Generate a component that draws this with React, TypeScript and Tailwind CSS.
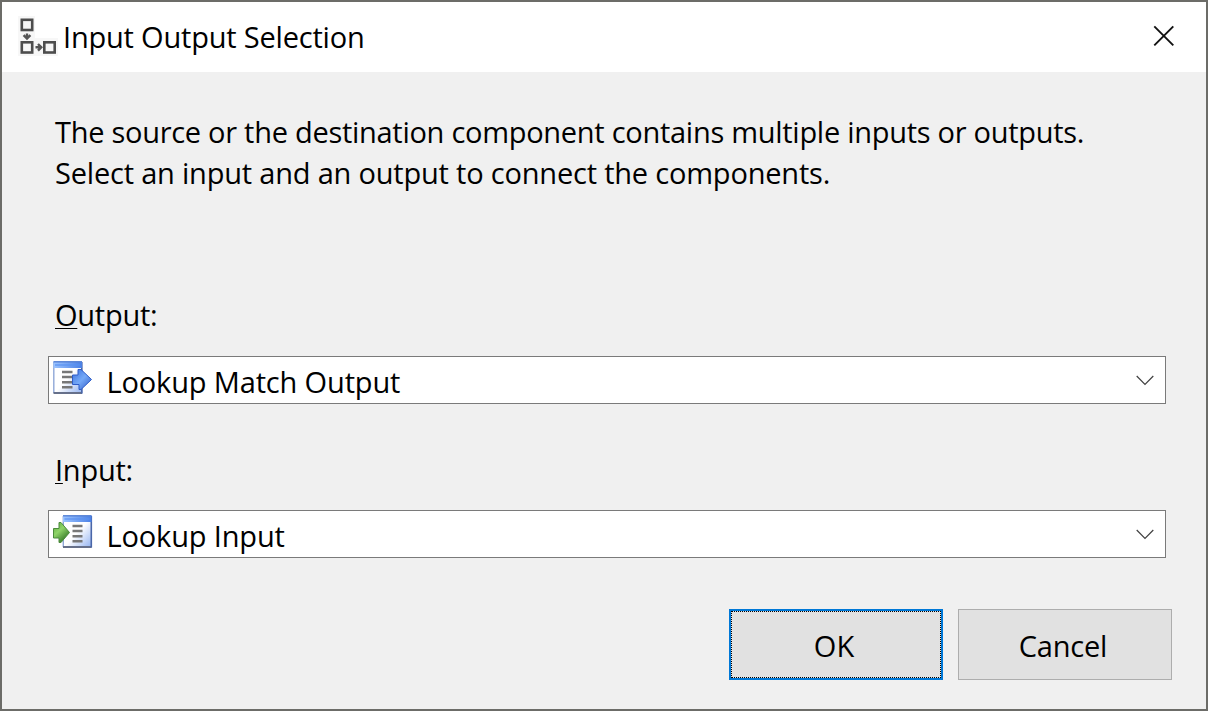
import type { ReactNode } from 'react';

function FlowIcon() {
  return (
    <svg width="40" height="40" viewBox="0 0 40 40" fill="none">
      <path d="M0 0H17V22H40V40H0Z" fill="#f7f7f7" />
      <g stroke="#4d4d4d" strokeWidth="2.6">
        <rect x="3.8" y="3.8" width="10.4" height="10.2" />
        <rect x="3.8" y="26.3" width="10.4" height="10.2" />
        <rect x="26.3" y="26.3" width="10.4" height="10.2" />
      </g>
      <g stroke="#555" strokeWidth="2.4">
        <path d="M9 17.5V23M5.6 19.2L9 22.6L12.4 19.2" />
        <path d="M17.5 31.3H23.5M20 28L23.3 31.3L20 34.6" />
      </g>
    </svg>
  );
}

function Sheet({ x }: { x: number }) {
  return (
    <g transform={`translate(${x} 0)`}>
      <rect x="1" y="1" width="28.5" height="31.5" fill="url(#sheet)" />
      <path d="M0.8 1V32" stroke="#8fa8d8" strokeWidth="1.4" />
      <path d="M0.5 32H29" stroke="#66708a" strokeWidth="2" />
      <path d="M28.8 1V32.5" stroke="#4a66a8" strokeWidth="1.6" />
      <rect x="0.5" y="0.5" width="28.5" height="6.5" fill="url(#bar)" />
      <path d="M0.5 0.8H29" stroke="#5580d4" strokeWidth="1.4" />
      <path d="M2 4H27" stroke="#5a92f0" strokeWidth="1.2" />
    </g>
  );
}

function Defs() {
  return (
    <defs>
      <linearGradient id="sheet" x1="0" y1="0" x2="1" y2="1">
        <stop offset="0.5" stopColor="#ffffff" />
        <stop offset="1" stopColor="#8fb0f0" />
      </linearGradient>
      <linearGradient id="bar" x1="0" y1="0" x2="1" y2="0">
        <stop offset="0" stopColor="#9cc4ff" />
        <stop offset="1" stopColor="#4a80e6" />
      </linearGradient>
      <linearGradient id="blue" x1="0" y1="0" x2="1" y2="1">
        <stop offset="0" stopColor="#3a70dc" />
        <stop offset="0.5" stopColor="#76aaf8" />
        <stop offset="1" stopColor="#2c58c4" />
      </linearGradient>
      <linearGradient id="green" x1="0" y1="0" x2="0.7" y2="1">
        <stop offset="0" stopColor="#5aa83c" />
        <stop offset="0.45" stopColor="#8fd468" />
        <stop offset="1" stopColor="#2b6e20" />
      </linearGradient>
    </defs>
  );
}

function OutputIcon() {
  return (
    <svg width="40" height="34" viewBox="0 0 40 34" fill="none">
      <Defs />
      <Sheet x={0} />
      <path d="M9 11H19.5M9 16H19.5M9 21.2H19.5M9 26.3H19.5" stroke="#777" strokeWidth="2.4" />
      <path d="M19.5 14H25V8.5H28L38.5 18.5L28 28.5H26V23.5H19.5Z" fill="url(#blue)" stroke="#2e5cc8" strokeWidth="1" />
    </svg>
  );
}

function InputIcon() {
  return (
    <svg width="40" height="34" viewBox="0 0 40 34" fill="none">
      <Sheet x={9.5} />
      <path d="M19.5 11H29.5M19.5 16H29.5M19.5 21.2H29.5M19.5 26.3H29.5" stroke="#777" strokeWidth="2.4" />
      <path d="M0.5 13.5H6V7.5H8L16.5 17.5L8 27.5H6V23H0.5Z" fill="url(#green)" stroke="#4b8a3c" strokeWidth="1" />
    </svg>
  );
}

function Select({ icon, children }: { icon: ReactNode; children: ReactNode }) {
  return (
    <button className="flex h-12 w-[1118px] items-center border border-[#7a7a7a] bg-white pl-1 pr-[11px] text-left">
      <span className="-mt-1 w-[53.5px]">{icon}</span>
      <span className="mt-1 flex-1 leading-[46px] tracking-[-0.15px]">{children}</span>
      <svg width="18" height="11" viewBox="0 0 18 11" fill="none" className="shrink-0">
        <path d="M0.7 1L9 9.3L17.3 1" stroke="#404040" strokeWidth="1.2" />
      </svg>
    </button>
  );
}

function Label({ accessKey, rest }: { accessKey: string; rest: string }) {
  return (
    <label className="pl-[7px] leading-[41px] tracking-[-0.25px]">
      <span className="underline decoration-1 underline-offset-[1.5px] [text-decoration-skip-ink:none]">{accessKey}</span>
      {rest}
    </label>
  );
}

export default function App() {
  return (
    <div className="flex h-[711px] w-[1208px] flex-col border-2 border-[#6c6c68] bg-[#f0f0f0] font-['Open_Sans',sans-serif] text-[29px] font-[370] text-black">
      <header className="flex h-[70px] shrink-0 items-start bg-white pl-4 pr-[31px]">
        <div className="mt-3.5 w-[45px]">
          <FlowIcon />
        </div>
        <h1 className="mt-[15px] flex-1 leading-10 tracking-[-0.2px]">Input Output Selection</h1>
        <button aria-label="Close" className="mt-[23px]">
          <svg width="22" height="22" viewBox="0 0 22 22" fill="none" className="block">
            <path d="M1.3 1.3L20.3 20.3M20.3 1.3L1.3 20.3" stroke="#111" strokeWidth="1.9" />
          </svg>
        </button>
      </header>
      <main className="flex flex-col pl-[46px] pt-[39px]">
        <div className="pl-[7px] leading-[41px]">
          <p className="tracking-[-0.28px]">The source or the destination component contains multiple inputs or outputs.</p>
          <p className="tracking-[-0.2px]">Select an input and an output to connect the components.</p>
        </div>
        <div className="mt-[101px] flex">
          <Label accessKey="O" rest="utput:" />
        </div>
        <div className="mt-[21px]">
          <Select icon={<OutputIcon />}>Lookup Match Output</Select>
        </div>
        <div className="mt-[45px] flex">
          <Label accessKey="I" rest="nput:" />
        </div>
        <div className="mt-5">
          <Select icon={<InputIcon />}>Lookup Input</Select>
        </div>
        <div className="mt-[51px] flex justify-end gap-[15px] pr-[34px]">
          <button className="h-[71px] w-[214px] border-2 border-[#0078d7] bg-[#e1e1e1]">
            <span className="flex h-full items-center justify-center border border-dotted border-black pr-1 pt-0.5">OK</span>
          </button>
          <button className="h-[71px] w-[214px] border border-[#adadad] bg-[#e1e1e1] pr-1 pt-0.5 tracking-[-0.2px]">Cancel</button>
        </div>
      </main>
    </div>
  );
}
